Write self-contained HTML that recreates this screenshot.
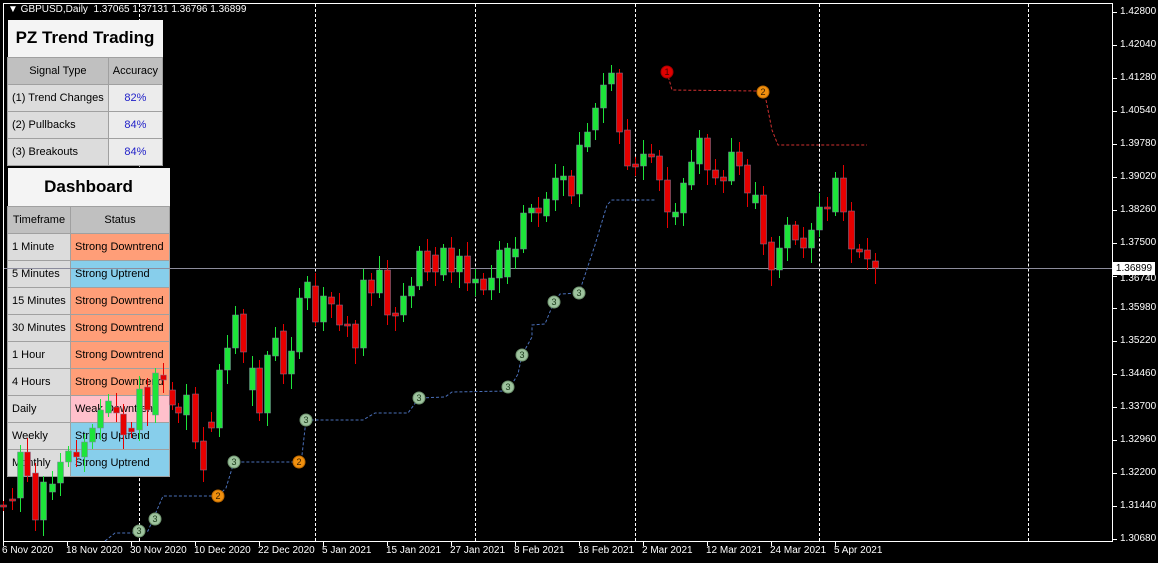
<!DOCTYPE html>
<html><head><meta charset="utf-8">
<style>
*{margin:0;padding:0;box-sizing:border-box}
body{width:1158px;height:563px;background:#000;overflow:hidden;position:relative;font-family:"Liberation Sans",sans-serif;}
#frame{position:absolute;left:3px;top:3px;width:1110px;height:539px;border:1px solid #fff}
.vd{position:absolute;top:4px;height:537px;width:0;border-left:1px dashed #fff}
.ax{position:absolute;left:1120px;color:#fff;font-size:10px;line-height:10px}
.tk{position:absolute;left:1113px;width:4px;height:1px;background:#fff}
.dt{position:absolute;top:546px;color:#fff;font-size:10px;line-height:10px;white-space:nowrap}
.dtk{position:absolute;top:542px;width:1px;height:4px;background:#fff}
table{position:absolute;border-collapse:collapse;font-size:11px;color:#000}
td{border:1px solid #a0a0a0;height:27px;padding:0 4px;white-space:nowrap}
.tt{background:#f4f4f4;font-weight:bold;text-align:center;border:none}
.hd{background:#c0c0c0;text-align:center}
.lc{background:#dcdcdc}
.dn{background:#ff9e78}.up{background:#87ceeb}.wk{background:#ffc0cb}
.pc{background:#ececec;color:#1f1fc8;text-align:center}
#svg{position:absolute;left:0;top:0}
</style></head><body>
<div id="frame"></div>
<div style="position:absolute;left:8px;top:4px;color:#fff;font-size:10px;white-space:nowrap">&#9660; GBPUSD,Daily&nbsp; 1.37065 1.37131 1.36796 1.36899</div>
<div class="vd" style="left:139px"></div><div class="vd" style="left:315px"></div><div class="vd" style="left:475px"></div><div class="vd" style="left:635px"></div><div class="vd" style="left:819px"></div><div class="vd" style="left:1028px"></div>

<table style="left:7px;top:20px;width:156px">
<tr><td colspan="2" class="tt" style="height:37px;font-size:17px">PZ Trend Trading</td></tr>
<tr><td class="hd" style="width:101px">Signal Type</td><td class="hd">Accuracy</td></tr>
<tr><td class="lc">(1) Trend Changes</td><td class="pc">82%</td></tr>
<tr><td class="lc">(2) Pullbacks</td><td class="pc">84%</td></tr>
<tr><td class="lc">(3) Breakouts</td><td class="pc">84%</td></tr>
</table>
<table style="left:7px;top:168px;width:163px">
<tr><td colspan="2" class="tt" style="height:38px;font-size:17px">Dashboard</td></tr>
<tr><td class="hd" style="width:63px">Timeframe</td><td class="hd">Status</td></tr>
<tr><td class="lc">1 Minute</td><td class="dn">Strong Downtrend</td></tr>
<tr><td class="lc">5 Minutes</td><td class="up">Strong Uptrend</td></tr>
<tr><td class="lc">15 Minutes</td><td class="dn">Strong Downtrend</td></tr>
<tr><td class="lc">30 Minutes</td><td class="dn">Strong Downtrend</td></tr>
<tr><td class="lc">1 Hour</td><td class="dn">Strong Downtrend</td></tr>
<tr><td class="lc">4 Hours</td><td class="dn">Strong Downtrend</td></tr>
<tr><td class="lc">Daily</td><td class="wk">Weak Downtrend</td></tr>
<tr><td class="lc">Weekly</td><td class="up">Strong Uptrend</td></tr>
<tr><td class="lc">Monthly</td><td class="up">Strong Uptrend</td></tr>
</table>

<svg id="svg" width="1158" height="563" xmlns="http://www.w3.org/2000/svg">
<line x1="4" y1="268.5" x2="1112" y2="268.5" stroke="#8c8c9c"/>
<g id="c"></g>
<polyline fill="none" stroke="#4a6fb8" stroke-dasharray="3,2" points="105,541 115,533 139,533 148,531 163,496 218,496 226,488 234,462 299,462 302,455 306,420 363,420 375,413 408,413 419,398 445,397 452,392 508,391 518,374 522,355 532,337 532,325 545,324 554,302 560,294 579,293 585,275 595,245 607,205 612,200 655,200"/>
<polyline fill="none" stroke="#d03030" stroke-dasharray="3,2" points="667,72 672,90 757,91"/>
<polyline fill="none" stroke="#d03030" stroke-dasharray="3,2" points="766,100 772,130 778,145 867,145"/>
<g font-family="Liberation Sans,sans-serif" font-size="9" text-anchor="middle">
<g fill="#9ec39e" stroke="#6f946f"><circle cx="139" cy="531" r="6"/><circle cx="155" cy="519" r="6"/><circle cx="234" cy="462" r="6"/><circle cx="306" cy="420" r="6"/><circle cx="419" cy="398" r="6"/><circle cx="508" cy="387" r="6"/><circle cx="522" cy="355" r="6"/><circle cx="554" cy="302" r="6"/><circle cx="579" cy="293" r="6"/></g>
<g fill="#f0900f" stroke="#c06a00"><circle cx="218" cy="496" r="6"/><circle cx="299" cy="462" r="6"/><circle cx="763" cy="92" r="6"/></g>
<circle cx="667" cy="72" r="6" fill="#e00000" stroke="#a00"/>
<g fill="#1a3a1a"><text x="139" y="534">3</text><text x="155" y="522">3</text><text x="234" y="465">3</text><text x="306" y="423">3</text><text x="419" y="401">3</text><text x="508" y="390">3</text><text x="522" y="358">3</text><text x="554" y="305">3</text><text x="579" y="296">3</text></g>
<g fill="#3a2000"><text x="218" y="499">2</text><text x="299" y="465">2</text><text x="763" y="95">2</text></g>
<text x="667" y="75" fill="#400">1</text>
</g>
</svg>
<div style="position:absolute;left:1113px;top:262px;width:42px;height:13px;background:#fff;color:#000;font-size:10px;line-height:13px;text-align:center">1.36899</div>
<div id="axis"></div>
<script>
var d=[[3,505,507],[12,499,500],[20,498,452],[27,452,476],[35,473,520],[43,520,482],[52,492,484],[60,483,462],[68,462,451],[76,452,457],[84,457,442],[92,442,428],[100,428,410],[108,413,401],[116,407,413],[123,414,435],[131,428,432],[139,430,389],[147,387,410],[155,415,373],[163,375,380],[172,390,405],[178,407,413],[186,415,395],[195,394,442],[203,441,470],[211,422,428],[219,428,370],[227,370,348],[235,348,315],[243,314,352],[252,390,368],[259,368,413],[267,413,355],[275,356,338],[283,331,374],[291,374,351],[299,352,298],[307,298,282],[315,286,322],[323,322,296],[331,297,304],[339,305,325],[347,324,326],[355,324,348],[363,348,280],[371,280,293],[379,293,270],[387,270,315],[395,313,316],[403,315,296],[411,296,286],[419,286,251],[427,251,272],[435,255,272],[443,275,248],[451,248,272],[459,272,256],[467,256,283],[475,283,279],[483,279,290],[491,290,278],[499,278,250],[507,277,248],[515,257,249],[523,249,213],[531,213,208],[538,208,213],[546,216,199],[555,200,178],[563,180,176],[571,176,196],[579,194,145],[587,147,132],[595,130,108],[603,108,85],[611,84,73],[619,73,132],[627,130,166],[635,164,167],[643,166,154],[651,154,157],[659,156,180],[667,180,212],[675,217,212],[683,213,183],[691,185,162],[699,164,138],[707,138,170],[715,170,178],[723,177,181],[731,181,152],[739,152,166],[747,165,193],[755,203,195],[763,195,244],[771,242,270],[779,270,248],[787,248,225],[795,225,240],[803,238,248],[811,248,230],[819,230,207],[827,207,208],[835,212,178],[843,178,212],[851,211,249],[859,249,252],[867,250,259],[875,261,268]];
var s='',r=7;
d.forEach(function(c,i){var o=c[1],cl=c[2],up=cl<o,col=up?'#1de43a':'#e60000';var t=Math.min(o,cl),b=Math.max(o,cl);if(b-t<2)b=t+2;
var w1=4+((i*7)%11),w2=4+((i*5)%13);
s+='<line x1="'+(c[0]+0.5)+'" y1="'+(t-w1)+'" x2="'+(c[0]+0.5)+'" y2="'+(b+w2)+'" stroke="'+col+'"/>';
s+='<rect x="'+(c[0]-2.5)+'" y="'+t+'" width="6" height="'+(b-t)+'" fill="'+col+'" stroke="#8080a0" stroke-width="0.5"/>';});
document.getElementById('c').innerHTML=s;
var L=['1.42800','1.42040','1.41280','1.40540','1.39780','1.39020','1.38260','1.37500','1.36740','1.35980','1.35220','1.34460','1.33700','1.32960','1.32200','1.31440','1.30680'];
var h='';L.forEach(function(l,i){var y=Math.round(12+i*32.94);if(l!='1.36740')h+='<div class="ax" style="top:'+(y-5)+'px">'+l+'</div>';else h+='<div class="ax" style="top:'+(y-2)+'px">'+l+'</div>';h+='<div class="tk" style="top:'+y+'px"></div>';});
var D=['6 Nov 2020','18 Nov 2020','30 Nov 2020','10 Dec 2020','22 Dec 2020','5 Jan 2021','15 Jan 2021','27 Jan 2021','8 Feb 2021','18 Feb 2021','2 Mar 2021','12 Mar 2021','24 Mar 2021','5 Apr 2021'];
D.forEach(function(t,i){h+='<div class="dt" style="left:'+(2+i*64)+'px">'+t+'</div><div class="dtk" style="left:'+(3+i*64)+'px"></div>';});
document.getElementById('axis').innerHTML=h;
</script>
</body></html>
